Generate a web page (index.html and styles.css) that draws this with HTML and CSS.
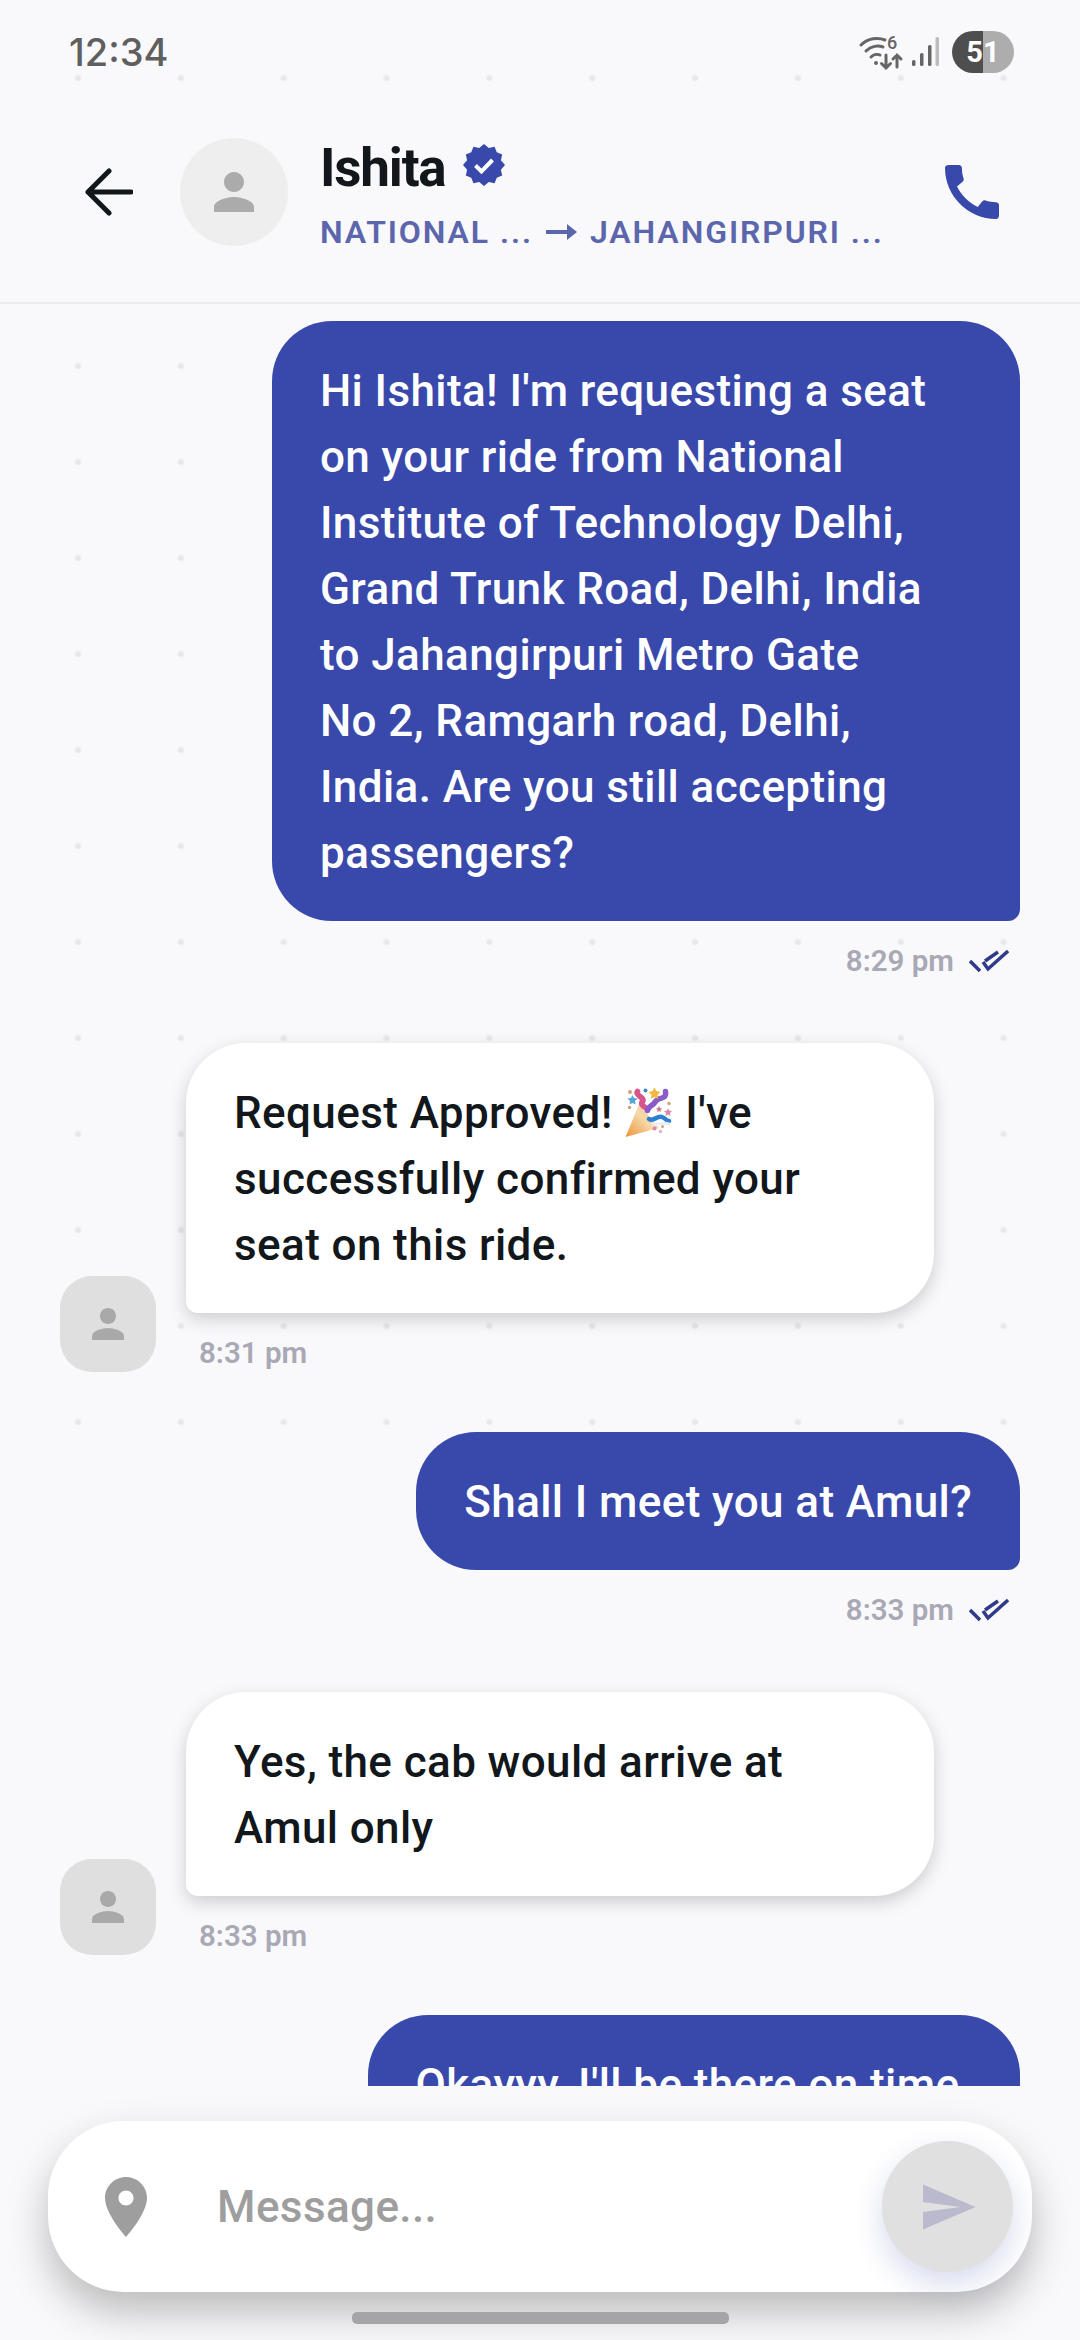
FILE: index.html
```html
<!DOCTYPE html>
<html lang="en">
<head>
<meta charset="utf-8">
<title>Ishita</title>
<link rel="stylesheet" href="styles.css">
</head>
<body>
<div class="screen">
  <div class="status">
    <span class="clock">12:34</span>
    <div class="status-icons">
      <svg class="wifi" width="46" height="36" viewBox="0 0 46 36">
        <g fill="none" stroke="#666" stroke-width="3" stroke-linecap="round">
          <path d="M1 11C8 4 18 3 25 6"/>
          <path d="M6 17C11 12 18 11 23 13"/>
          <path d="M11 23C14 20 18 20 20 21"/>
          <path d="M26 21v13M21.500 29.500L26 34l4.500-4.500"/>
          <path d="M37 33V21M33 25l4-4 4 4"/>
        </g>
        <circle cx="16" cy="29" r="2" fill="#666"/>
        <text class="wifi-six" x="27" y="15">6</text>
      </svg>
      <svg class="bars" width="28" height="30" viewBox="0 0 28 30">
        <rect x="1" y="23" width="3.500" height="6" rx="1.500" fill="#666"/>
        <rect x="9" y="16" width="3.500" height="13" rx="1.500" fill="#666"/>
        <rect x="17" y="8" width="3.500" height="21" rx="1.500" fill="#666"/>
        <rect x="24.500" y="0" width="3.500" height="29" rx="1.500" fill="#bcbcbc"/>
      </svg>
      <div class="battery"><span>51</span></div>
    </div>
  </div>

  <header class="header">
    <svg class="back" width="48" height="48" viewBox="0 0 48 48">
      <path d="M46 24H3M24 3L3 24l21 21" fill="none" stroke="#12171c" stroke-width="5" stroke-linecap="round" stroke-linejoin="round"/>
    </svg>
    <div class="avatar">
      <svg width="60" height="60" viewBox="0 0 24 24"><path fill="#ababab" d="M12 12c2.210 0 4-1.790 4-4s-1.790-4-4-4-4 1.790-4 4 1.790 4 4 4zm0 2c-2.670 0-8 1.340-8 4v2h16v-2c0-2.660-5.330-4-8-4z"/></svg>
    </div>
    <div class="title">
      <div class="name-row">
        <span class="name">Ishita</span>
        <svg class="badge" width="42" height="42" viewBox="0 0 42 42">
          <polygon fill="#3949ab" points="21,0 25.800,4.100 31.500,2.800 33.800,8.200 39.200,10.500 37.900,16.200 42,21 37.900,25.800 39.200,31.500 33.800,33.800 31.500,39.200 25.800,37.900 21,42 16.200,37.900 10.500,39.200 8.200,33.800 2.800,31.500 4.100,25.800 0,21 4.100,16.200 2.800,10.500 8.200,8.200 10.500,2.800 16.200,4.100"/>
          <path d="M12.500 21.500l6 6 11-11.500" fill="none" stroke="#fff" stroke-width="4"/>
        </svg>
      </div>
      <div class="route">
        <span>NATIONAL ...</span>
        <svg class="route-arrow" width="31" height="16" viewBox="0 0 31 16"><path fill="#5b66ac" d="M0 6h21V0l10 8-10 8v-6H0z"/></svg>
        <span>JAHANGIRPURI ...</span>
      </div>
    </div>
    <svg class="call" width="72" height="72" viewBox="0 0 24 24"><path fill="#3949ab" d="M20.010 15.380c-1.230 0-2.420-.2-3.530-.56-.35-.12-.74-.03-1.010.24l-1.570 1.970c-2.830-1.350-5.480-3.900-6.890-6.830l1.950-1.660c.27-.28.35-.67.24-1.020-.37-1.110-.56-2.300-.56-3.530 0-.54-.45-.99-.99-.99H4.190C3.650 3 3 3.240 3 3.990 3 13.280 10.730 21 20.010 21c.71 0 .99-.63.99-1.180v-3.450c0-.54-.45-.99-.99-.99z"/></svg>
  </header>

  <main class="chat">
    <section class="msg sent">
      <div class="bubble">Hi Ishita! I'm requesting a seat on your ride from National Institute of Technology Delhi, Grand Trunk Road, Delhi, India to Jahangirpuri Metro Gate No&nbsp;2, Ramgarh road, Delhi, India. Are you still accepting passengers?</div>
      <div class="meta"><span>8:29 pm</span>
        <svg class="ticks" width="40" height="24" viewBox="0 0 40 24"><path d="M1 12l10 10M14 13l5 7L39 2M16 12L29 3" fill="none" stroke="#2f3b88" stroke-width="3.500"/></svg>
      </div>
    </section>

    <section class="msg received">
      <div class="mini-avatar">
        <svg width="48" height="48" viewBox="0 0 24 24"><path fill="#a9a9a9" d="M12 12c2.210 0 4-1.790 4-4s-1.790-4-4-4-4 1.790-4 4 1.790 4 4 4zm0 2c-2.670 0-8 1.340-8 4v2h16v-2c0-2.660-5.330-4-8-4z"/></svg>
      </div>
      <div class="stack">
        <div class="bubble">Request Approved! <svg class="popper" width="50" height="50" viewBox="0 0 100 100">
          <defs><linearGradient id="cone" x1="0" y1="1" x2="1" y2="0"><stop offset="0" stop-color="#f0913a"/><stop offset=".55" stop-color="#f6d9a8"/><stop offset="1" stop-color="#eec48c"/></linearGradient></defs>
          <path fill="url(#cone)" d="M3 98L30 33l40 47z"/>
          <path d="M27 7c-6 8 16 12 10 20s6 10 10 16" fill="none" stroke="#d8548c" stroke-width="11" stroke-linecap="round"/>
          <path d="M83 7c3 18-14 10-20 20s-14 8-16 18" fill="none" stroke="#8b5cc8" stroke-width="11" stroke-linecap="round"/>
          <path d="M50 62c10 6 16-8 26-4s8 8 14 8" fill="none" stroke="#2d7fd0" stroke-width="9" stroke-linecap="round"/>
          <path d="M58 72c10 2 18-4 32 0" fill="none" stroke="#e9edf6" stroke-width="6" stroke-linecap="round"/>
          <polygon fill="#f3b93f" points="61,-1 65,6 73,8 67,14 68,22 61,18 54,22 55,14 49,8 57,6"/>
          <polygon fill="#56a5d8" points="17,14 20,20 27,21 22,26 23,33 17,30 11,33 12,26 7,21 14,20"/>
          <polygon fill="#d88aa8" points="88,40 90,45 96,46 92,50 93,56 88,53 83,56 84,50 80,46 86,45"/>
          <polygon fill="#cc7a94" points="70,36 72,40 76,41 73,44 74,48 70,46 66,48 67,44 64,41 68,40"/>
          <circle cx="43" cy="5" r="4" fill="#3f8dbf"/><circle cx="12" cy="8" r="4" fill="#cfa27a"/><circle cx="11" cy="39" r="3.500" fill="#cfa27a"/>
          <circle cx="61" cy="81" r="4" fill="#d88aa8"/><circle cx="73" cy="87" r="3.500" fill="#e7b3c4"/><circle cx="77" cy="77" r="3" fill="#cfa27a"/><circle cx="90" cy="31" r="3.500" fill="#cfa27a"/>
        </svg> I've successfully confirmed your seat on this ride.</div>
        <div class="meta"><span>8:31 pm</span></div>
      </div>
    </section>

    <section class="msg sent">
      <div class="bubble">Shall I meet you at Amul?</div>
      <div class="meta"><span>8:33 pm</span>
        <svg class="ticks" width="40" height="24" viewBox="0 0 40 24"><path d="M1 12l10 10M14 13l5 7L39 2M16 12L29 3" fill="none" stroke="#2f3b88" stroke-width="3.500"/></svg>
      </div>
    </section>

    <section class="msg received">
      <div class="mini-avatar">
        <svg width="48" height="48" viewBox="0 0 24 24"><path fill="#a9a9a9" d="M12 12c2.210 0 4-1.790 4-4s-1.790-4-4-4-4 1.790-4 4 1.790 4 4 4zm0 2c-2.670 0-8 1.340-8 4v2h16v-2c0-2.660-5.330-4-8-4z"/></svg>
      </div>
      <div class="stack">
        <div class="bubble">Yes, the cab would arrive at Amul only</div>
        <div class="meta"><span>8:33 pm</span></div>
      </div>
    </section>

    <section class="msg sent">
      <div class="bubble">Okayyy, I'll be there on time.</div>
    </section>
  </main>

  <div class="composer">
    <svg class="pin" width="72" height="72" viewBox="0 0 24 24"><path fill="#9e9e9e" d="M12 2C8.130 2 5 5.130 5 9c0 5.250 7 13 7 13s7-7.750 7-13c0-3.870-3.130-7-7-7zm0 9.500c-1.380 0-2.500-1.120-2.500-2.500s1.120-2.500 2.500-2.500 2.500 1.120 2.500 2.500-1.120 2.500-2.500 2.500z"/></svg>
    <div class="placeholder">Message...</div>
    <div class="send">
      <svg width="60" height="60" viewBox="0 0 24 24"><path fill="#bab9cd" d="M2.010 21L23 12 2.010 3 2 10l15 2-15 2z"/></svg>
    </div>
  </div>
  <div class="home"></div>
</div>
</body>
</html>
```

FILE: styles.css
```css
* { box-sizing: border-box; }

html, body {
  margin: 0;
  padding: 0;
}

body {
  width: 1080px;
  height: 2340px;
  overflow: hidden;
  background: #f9f9fb;
  font-family: Roboto, "Noto Sans", sans-serif;
}

.screen {
  position: relative;
  isolation: isolate;
  display: flex;
  flex-direction: column;
  width: 1080px;
  height: 2340px;
  overflow: hidden;
}

.screen::before {
  content: "";
  position: absolute;
  top: 0;
  left: 0;
  z-index: -1;
  width: 1080px;
  height: 1440px;
  background-image: radial-gradient(circle 4px at 78px 78px, #e8e8eb 0, #e8e8eb 2px, rgba(232, 232, 235, 0) 4px);
  background-size: 102.857px 96px;
}

/* status bar */
.status {
  flex: none;
  display: flex;
  justify-content: space-between;
  align-items: center;
  height: 84px;
  padding: 20px 66px 0 69px;
}

.clock {
  font-family: Inter, Roboto, sans-serif;
  font-size: 38px;
  font-weight: 500;
  color: #5f5f5f;
}

.status-icons {
  display: flex;
  align-items: center;
}

.wifi {
  overflow: visible;
}

.wifi-six {
  font-family: Roboto, sans-serif;
  font-size: 18px;
  font-weight: 500;
  fill: #666;
}

.bars {
  margin-left: 5px;
}

.battery {
  display: flex;
  justify-content: center;
  align-items: center;
  width: 62px;
  height: 42px;
  margin-left: 13px;
  border-radius: 21px;
  background: linear-gradient(90deg, #4e4e4e 50%, #adadad 50%);
  color: #fff;
  font-size: 29px;
  font-weight: 700;
}

/* header */
.header {
  flex: none;
  display: flex;
  align-items: center;
  height: 220px;
  padding: 0 72px 2px 85px;
  background: #f9f9fb;
  border-bottom: 2px solid #ececee;
}

.back {
  flex: none;
}

.avatar {
  flex: none;
  display: flex;
  justify-content: center;
  align-items: center;
  width: 108px;
  height: 108px;
  margin-left: 47px;
  border-radius: 50%;
  background: #eeeeee;
}

.title {
  flex: 1;
  display: flex;
  flex-direction: column;
  gap: 14px;
  margin: 5px 0 0 32px;
}

.name-row {
  display: flex;
  align-items: center;
  gap: 17px;
  height: 60px;
}

.name {
  font-size: 53px;
  font-weight: 700;
  letter-spacing: -1.200px;
  color: #12171c;
}

.badge {
  flex: none;
  margin-top: -6px;
}

.route {
  display: flex;
  align-items: center;
  gap: 13px;
  height: 40px;
  font-size: 32px;
  font-weight: 600;
  letter-spacing: 1.900px;
  color: #5b66ac;
}

.call {
  flex: none;
}

/* messages */
.chat {
  flex: none;
  display: flex;
  flex-direction: column;
  height: 1782px;
  padding: 17px 60px 0;
  overflow: hidden;
}

.msg {
  flex: none;
}

.sent {
  display: flex;
  flex-direction: column;
  align-items: flex-end;
  margin-bottom: 63px;
}

.received {
  display: flex;
  align-items: flex-end;
  gap: 30px;
  margin-bottom: 60px;
}

.bubble {
  max-width: 748px;
  padding: 37px 48px 35px;
  font-size: 44px;
  font-weight: 530;
  line-height: 66px;
  letter-spacing: 0.400px;
}

.sent .bubble {
  border-radius: 60px 60px 12px 60px;
  background: #3949ab;
  color: #ffffff;
}

.received .bubble {
  border-radius: 60px 60px 60px 12px;
  background: #ffffff;
  color: #12171c;
  box-shadow: 0 6px 18px rgba(0, 0, 0, 0.18);
}

.popper {
  vertical-align: -10px;
  overflow: visible;
}

.meta {
  display: flex;
  align-items: center;
  gap: 15px;
  height: 39px;
  margin-top: 20px;
  font-size: 29.500px;
  font-weight: 600;
  color: #a9a9b5;
}

.sent .meta {
  padding-right: 11px;
}

.received .meta {
  padding-left: 13px;
}

.mini-avatar {
  flex: none;
  display: flex;
  justify-content: center;
  align-items: center;
  width: 96px;
  height: 96px;
  border-radius: 32px;
  background: #dfdfdf;
}

.stack {
  display: flex;
  flex-direction: column;
}

/* composer */
.composer {
  flex: none;
  display: flex;
  align-items: center;
  height: 171px;
  margin: 35px 48px 0;
  padding: 0 19px 0 42px;
  border-radius: 76px;
  background: #ffffff;
  box-shadow: 0 20px 40px rgba(0, 0, 0, 0.25);
}

.pin {
  flex: none;
}

.placeholder {
  flex: 1;
  margin-left: 55px;
  font-size: 44px;
  font-weight: 530;
  letter-spacing: 0.400px;
  color: #9e9e9e;
}

.send {
  flex: none;
  display: flex;
  justify-content: center;
  align-items: center;
  width: 131px;
  height: 131px;
  border-radius: 50%;
  background: #e0e0e0;
  box-shadow: 0 12px 30px rgba(57, 73, 171, 0.2);
}

.home {
  flex: none;
  align-self: center;
  width: 377px;
  height: 12px;
  margin-top: 20px;
  border-radius: 5px;
  background: #a5a5a7;
}
```
